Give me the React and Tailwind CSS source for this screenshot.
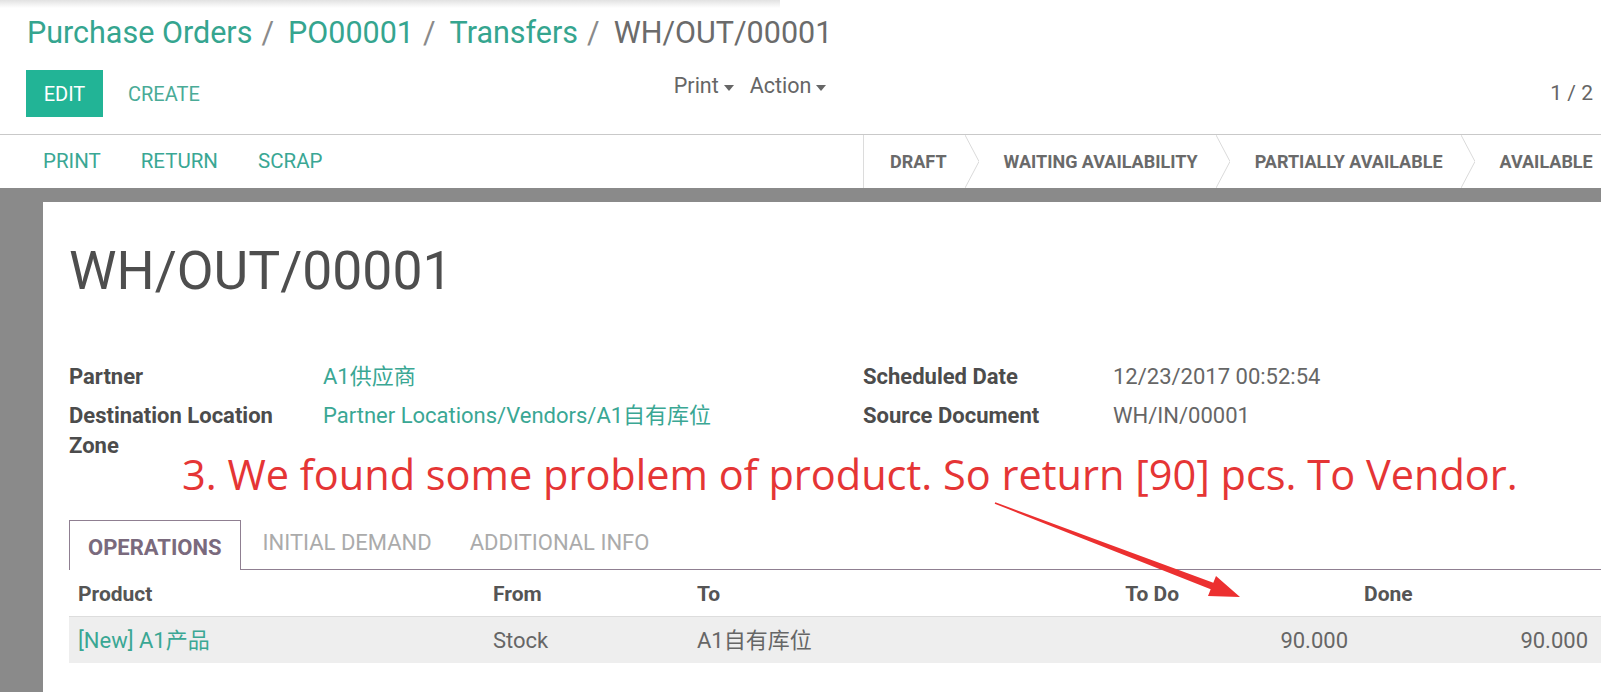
export default function App() {
  const sep = "text-[#8a8a8a] ml-[9px] mr-[14px]";
  const Caret = () => (
    <svg width="10" height="6" viewBox="0 0 10 6" className="ml-[5px] mt-[3px]">
      <polygon points="0,0 10,0 5,6" fill="#666" />
    </svg>
  );
  const Chevron = () => (
    <svg width="14" height="53" viewBox="0 0 14 53" className="ml-[18px] mr-[25px] shrink-0">
      <polyline points="0,0 14,26.5 0,53" fill="none" stroke="#dadada" strokeWidth="1" />
    </svg>
  );
  return (
    <div className="relative w-[1601px] h-[692px] overflow-hidden bg-white flex flex-col font-['Roboto','Noto_Sans_CJK_SC',sans-serif]">
      {/* control panel */}
      <div className="h-[135px] shrink-0 border-b border-[#c9c9c9] flex flex-col">
        <div className="pt-[16px] pl-[27px] text-[30.5px] leading-[34px] flex whitespace-nowrap">
          <span className="text-[#35a58f]">Purchase Orders</span>
          <span className={sep}>/</span>
          <span className="text-[#35a58f]">PO00001</span>
          <span className={sep}>/</span>
          <span className="text-[#35a58f]">Transfers</span>
          <span className={sep}>/</span>
          <span className="text-[#6b6b6b]">WH/OUT/00001</span>
        </div>
        <div className="mt-[20px] flex h-[47px] pl-[26px] text-[20px]">
          <div className="w-[77px] h-[47px] bg-[#22b496] text-white flex items-center justify-center">EDIT</div>
          <div className="ml-[25px] flex items-center text-[#4aab97]">CREATE</div>
          <div className="ml-[474px] pt-[4px] flex items-start text-[#666] text-[21.5px] leading-[24px]">
            <span className="flex items-center">Print<Caret /></span>
            <span className="flex items-center ml-[16px]">Action<Caret /></span>
          </div>
          <div className="ml-auto mr-[8px] flex items-center text-[#666] text-[21px]">1 / 2</div>
        </div>
      </div>

      {/* status bar */}
      <div className="h-[53px] shrink-0 flex">
        <div className="w-[863px] shrink-0 flex items-center pl-[43px] gap-[40px] text-[20.5px] text-[#3aa794]">
          <span>PRINT</span>
          <span>RETURN</span>
          <span>SCRAP</span>
        </div>
        <div className="flex-1 flex items-center border-l border-[#dcdcdc] pl-[26px] text-[18px] font-bold text-[#6a6a6a] whitespace-nowrap">
          <span>DRAFT</span>
          <Chevron />
          <span>WAITING AVAILABILITY</span>
          <Chevron />
          <span>PARTIALLY AVAILABLE</span>
          <Chevron />
          <span>AVAILABLE</span>
        </div>
      </div>

      {/* sheet area */}
      <div className="flex-1 bg-[#8a8a8a] pt-[14px] pl-[43px]">
        <div className="bg-white w-[1600px] h-full pl-[26px] pt-[38px]">
          <div className="text-[53.5px] leading-[62px] text-[#4e4e4e]">WH/OUT/00001</div>

          <div className="mt-[60px] flex leading-[30px] text-[22px]">
            <div className="w-[794px] shrink-0 grid grid-cols-[254px_1fr] gap-y-[9px] content-start">
              <div className="font-bold text-[#4c4c4c]">Partner</div>
              <div className="text-[#3aa794]">A1供应商</div>
              <div className="font-bold text-[#4c4c4c] w-[230px]">Destination Location Zone</div>
              <div className="text-[#3aa794]">Partner Locations/Vendors/A1自有库位</div>
            </div>
            <div className="grid grid-cols-[250px_1fr] gap-y-[9px] content-start">
              <div className="font-bold text-[#4c4c4c]">Scheduled Date</div>
              <div className="text-[#666]">12/23/2017 00:52:54</div>
              <div className="font-bold text-[#4c4c4c]">Source Document</div>
              <div className="text-[#666]">WH/IN/00001</div>
            </div>
          </div>

          {/* tabs */}
          <div className="mt-[59px] h-[50px] flex items-end border-b border-[#8f7f91] text-[22px]">
            <div className="h-[50px] -mb-px border border-b-0 border-[#8f7f91] bg-white px-[18px] pt-[3px] flex items-center font-bold text-[#7a6a7d]">OPERATIONS</div>
            <div className="h-[49px] ml-[3px] px-[19px] pb-[4px] flex items-center text-[#ababab]">INITIAL DEMAND</div>
            <div className="h-[49px] px-[19px] pb-[4px] flex items-center text-[#ababab]">ADDITIONAL INFO</div>
          </div>

          {/* table */}
          <div className="h-[47px] pt-[3px] flex items-center border-b border-[#dddddd] text-[21px] font-bold text-[#555]">
            <div className="w-[415px] pl-[9px]">Product</div>
            <div className="w-[204px] pl-[9px]">From</div>
            <div className="w-[400px] pl-[9px]">To</div>
            <div className="w-[100px] pr-[9px] text-right">To Do</div>
            <div className="pl-[176px]">Done</div>
          </div>
          <div className="h-[46px] flex items-center bg-[#eeeeee] text-[22px] text-[#666]">
            <div className="w-[415px] pl-[9px] text-[#3aa794]">[New] A1产品</div>
            <div className="w-[204px] pl-[9px]">Stock</div>
            <div className="w-[400px] pl-[9px]">A1自有库位</div>
            <div className="w-[260px] text-right">90.000</div>
            <div className="w-[240px] text-right">90.000</div>
          </div>
        </div>
      </div>

      {/* top shadow */}
      <div className="absolute top-0 left-0 w-[780px] h-[8px] bg-linear-to-b from-[#e2e2e2] to-transparent pointer-events-none" />

      {/* annotation */}
      <div className="absolute left-[182px] top-[449px] leading-[50px] text-[41.5px] text-[#e53535] whitespace-nowrap font-['Open_Sans',sans-serif]">
        3. We found some problem of product. So return [90] pcs. To Vendor.
      </div>
      <svg className="absolute left-0 top-0 pointer-events-none" width="1601" height="692" viewBox="0 0 1601 692">
        <polygon
          points="995.3,502.3 1213.3,582.7 1216,576 1240,597 1208,596 1210.7,589.3 994.7,503.7"
          fill="#ec3030"
        />
      </svg>
    </div>
  );
}
